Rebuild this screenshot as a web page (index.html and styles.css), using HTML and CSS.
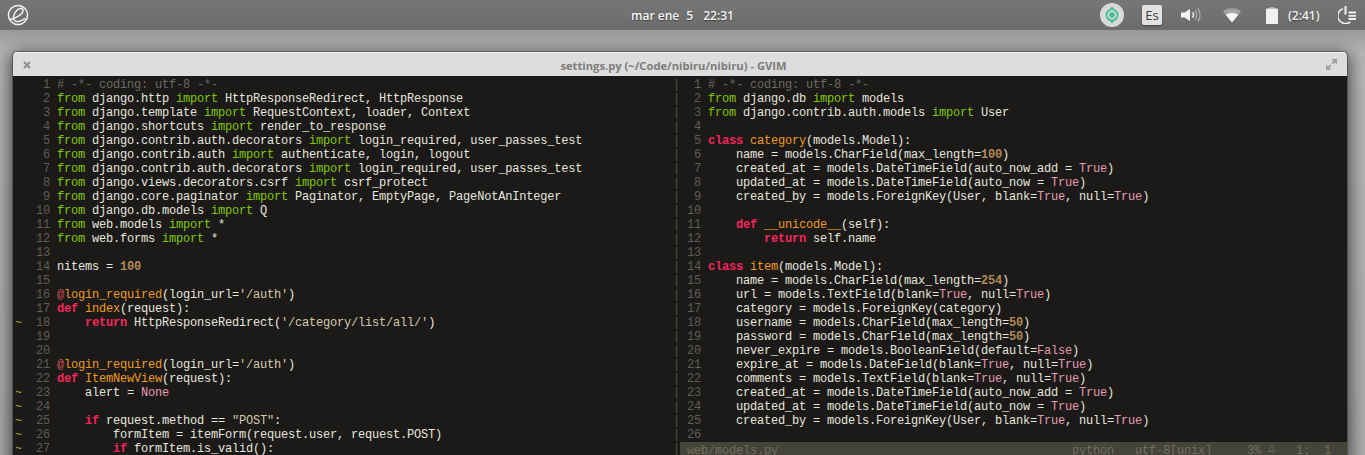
FILE: index.html
```html
<!DOCTYPE html>
<html lang="es">
<head>
<meta charset="utf-8">
<title>settings.py - GVIM</title>
<link rel="stylesheet" href="styles.css">
</head>
<body>
<header class="panel">
  <div class="panel-left">
    <svg class="logo" width="22" height="22" viewBox="0 0 22 22" fill="none" stroke="#f2f2f2" stroke-width="1.5">
      <circle cx="11" cy="11" r="9.6"/>
      <path d="M2.6 15.6C6.5 15.2 15.5 10.8 16 6.8 16.3 4 12.6 3.7 10.2 6 7.2 8.9 5.3 13.6 7 16.2 8.6 18.6 13.6 17.8 18.2 14.4"/>
    </svg>
  </div>
  <div class="clock"><span>mar ene</span><span>5</span><span>22:31</span></div>
  <div class="indicators">
    <svg class="ind-sync" width="24" height="24" viewBox="0 0 24 24">
      <circle cx="12" cy="12" r="12" fill="#d8d8d8"/>
      <circle cx="12" cy="12" r="5.6" fill="none" stroke="#3fbf96" stroke-width="1.8"/>
      <circle cx="12" cy="12" r="2.8" fill="#3fbf96"/>
      <path d="M12 3.6 9.8 6.600h4.400zM12 20.400l-2.200-3h4.400z" fill="#3fbf96"/>
    </svg>
    <div class="ind-lang">Es</div>
    <svg class="ind-sound" width="21" height="16" viewBox="0 0 21 16" fill="none">
      <path d="M0 5.500h3.500L9 2v12L3.500 10.500H0z" fill="#f2f2f2"/>
      <path d="M11.500 5.500a3.500 3.500 0 0 1 0 5" stroke="#f2f2f2" stroke-width="1.500"/>
      <path d="M14 3.500a7 7 0 0 1 0 9" stroke="#a8a8a8" stroke-width="1.500"/>
      <path d="M16.800 1.500a11 11 0 0 1 0 13" stroke="#a8a8a8" stroke-width="1.500"/>
    </svg>
    <svg class="ind-wifi" width="18" height="16" viewBox="0 0 18 16">
      <path d="M0 4.500C5 .2 13 .2 18 4.500L9 15.500z" fill="#a3a3a3"/>
      <path d="M2.700 7.800C6 5.300 12 5.300 15.300 7.800L9 15.500z" fill="#f6f6f6"/>
    </svg>
    <svg class="ind-battery" width="12" height="17" viewBox="0 0 12 17">
      <path d="M3.500 0h5v1.500h-5z" fill="#b5b5b5"/>
      <rect y="1.500" width="12" height="15.500" rx="1" fill="#f2f2f2"/>
    </svg>
    <div class="ind-time">(2:41)</div>
    <svg class="ind-power" width="18" height="18" viewBox="0 0 18 18" fill="none" stroke="#f2f2f2">
      <path d="M4.800 2.800A7.600 7.600 0 1 0 12.200 15.800" stroke-width="1.600"/>
      <path d="M7.500 0v8.500" stroke-width="2"/>
      <path d="M10.500 6.500H18M10.500 9.800H18M10.500 13H18" stroke-width="1.800"/>
    </svg>
  </div>
</header>

<main class="window">
  <div class="titlebar">
    <svg class="win-close" width="8" height="8" viewBox="0 0 8 8"><path d="M1 1l6 6M7 1L1 7" stroke="#8c8c8c" stroke-width="2"/></svg>
    <div class="win-title">settings.py (~/Code/nibiru/nibiru) - GVIM</div>
    <svg class="win-max" width="11" height="11" viewBox="0 0 11 11" fill="#a0a0a0"><path d="M5.500 0H11v5.500L9 3.500 7 5.500 5.500 4 7.500 2zM0 5.500V11h5.500l-2-2 2-2L4 5.500l-2 2z"/></svg>
  </div>
  <div class="editor">
<pre class="pane pane-left"><span class="n">  1</span> <span class="c"># -*- coding: utf-8 -*-</span>
<span class="n">  2</span> <span class="k">from</span> django.http <span class="k">import</span> HttpResponseRedirect, HttpResponse
<span class="n">  3</span> <span class="k">from</span> django.template <span class="k">import</span> RequestContext, loader, Context
<span class="n">  4</span> <span class="k">from</span> django.shortcuts <span class="k">import</span> render_to_response
<span class="n">  5</span> <span class="k">from</span> django.contrib.auth.decorators <span class="k">import</span> login_required, user_passes_test
<span class="n">  6</span> <span class="k">from</span> django.contrib.auth <span class="k">import</span> authenticate, login, logout
<span class="n">  7</span> <span class="k">from</span> django.contrib.auth.decorators <span class="k">import</span> login_required, user_passes_test
<span class="n">  8</span> <span class="k">from</span> django.views.decorators.csrf <span class="k">import</span> csrf_protect
<span class="n">  9</span> <span class="k">from</span> django.core.paginator <span class="k">import</span> Paginator, EmptyPage, PageNotAnInteger
<span class="n"> 10</span> <span class="k">from</span> django.db.models <span class="k">import</span> Q
<span class="n"> 11</span> <span class="k">from</span> web.models <span class="k">import</span> *
<span class="n"> 12</span> <span class="k">from</span> web.forms <span class="k">import</span> *
<span class="n"> 13</span>
<span class="n"> 14</span> nitems = <span class="d">100</span>
<span class="n"> 15</span>
<span class="n"> 16</span> <span class="a">@</span><span class="f">login_required</span>(login_url=<span class="s">'/auth'</span>)
<span class="n"> 17</span> <span class="r">def</span> <span class="f">index</span>(request):
<span class="t">~</span><span class="n"> 18</span>     <span class="r">return</span> HttpResponseRedirect(<span class="s">'/category/list/all/'</span>)
<span class="n"> 19</span>
<span class="n"> 20</span>
<span class="n"> 21</span> <span class="a">@</span><span class="f">login_required</span>(login_url=<span class="s">'/auth'</span>)
<span class="n"> 22</span> <span class="r">def</span> <span class="f">ItemNewView</span>(request):
<span class="t">~</span><span class="n"> 23</span>     alert = <span class="b">None</span>
<span class="t">~</span><span class="n"> 24</span>
<span class="t">~</span><span class="n"> 25</span>     <span class="r">if</span> request.method == <span class="s">"POST"</span>:
<span class="t">~</span><span class="n"> 26</span>         formItem = itemForm(request.user, request.POST)
<span class="t">~</span><span class="n"> 27</span>         <span class="r">if</span> formItem.is_valid():</pre>
<pre class="pane pane-sep">|
|
|
|
|
|
|
|
|
|
|
|
|
|
|
|
|
|
|
|
|
|
|
|
|
|
|</pre>
<div class="pane-right">
<pre class="pane"><span class="n">  1</span> <span class="c"># -*- coding: utf-8 -*-</span>
<span class="n">  2</span> <span class="k">from</span> django.db <span class="k">import</span> models
<span class="n">  3</span> <span class="k">from</span> django.contrib.auth.models <span class="k">import</span> User
<span class="n">  4</span>
<span class="n">  5</span> <span class="r">class</span> <span class="f">category</span>(models.Model):
<span class="n">  6</span>     name = models.CharField(max_length=<span class="d">100</span>)
<span class="n">  7</span>     created_at = models.DateTimeField(auto_now_add = <span class="b">True</span>)
<span class="n">  8</span>     updated_at = models.DateTimeField(auto_now = <span class="b">True</span>)
<span class="n">  9</span>     created_by = models.ForeignKey(User, blank=<span class="b">True</span>, null=<span class="b">True</span>)
<span class="n"> 10</span>
<span class="n"> 11</span>     <span class="r">def</span> <span class="f">__unicode__</span>(self):
<span class="n"> 12</span>         <span class="r">return</span> self.name
<span class="n"> 13</span>
<span class="n"> 14</span> <span class="r">class</span> <span class="f">item</span>(models.Model):
<span class="n"> 15</span>     name = models.CharField(max_length=<span class="d">254</span>)
<span class="n"> 16</span>     url = models.TextField(blank=<span class="b">True</span>, null=<span class="b">True</span>)
<span class="n"> 17</span>     category = models.ForeignKey(category)
<span class="n"> 18</span>     username = models.CharField(max_length=<span class="d">50</span>)
<span class="n"> 19</span>     password = models.CharField(max_length=<span class="d">50</span>)
<span class="n"> 20</span>     never_expire = models.BooleanField(default=<span class="b">False</span>)
<span class="n"> 21</span>     expire_at = models.DateField(blank=<span class="b">True</span>, null=<span class="b">True</span>)
<span class="n"> 22</span>     comments = models.TextField(blank=<span class="b">True</span>, null=<span class="b">True</span>)
<span class="n"> 23</span>     created_at = models.DateTimeField(auto_now_add = <span class="b">True</span>)
<span class="n"> 24</span>     updated_at = models.DateTimeField(auto_now = <span class="b">True</span>)
<span class="n"> 25</span>     created_by = models.ForeignKey(User, blank=<span class="b">True</span>, null=<span class="b">True</span>)
<span class="n"> 26</span></pre>
<pre class="status"> web/models.py                                          python   utf-8[unix]     3% <span class="arrow">△</span>   1:  1</pre>
</div>
  </div>
</main>
</body>
</html>
```

FILE: styles.css
```css
* { box-sizing: border-box; }

html, body {
  margin: 0;
  height: 455px;
  overflow: hidden;
}

body {
  position: relative;
  background: linear-gradient(#999 0, #b4b4b4 22px, #a8a8a8 100%) 0 30px no-repeat;
  background-color: #a8a8a8;
  font-family: "Open Sans", "Liberation Sans", sans-serif;
}

.panel {
  display: grid;
  grid-template-columns: 1fr auto 1fr;
  align-items: center;
  height: 30px;
  background: linear-gradient(#767676, #6c6c6c);
  color: #f6f6f6;
  font-size: 12px;
  font-weight: 600;
  text-shadow: 0 1px 1px rgba(0, 0, 0, .45);
}

.panel-left {
  display: flex;
  align-items: center;
  padding-left: 7px;
}

.clock {
  display: flex;
  gap: 7px;
}

.clock span:last-child { margin-left: 3px; }

.indicators {
  display: flex;
  align-items: center;
  justify-content: flex-end;
  padding-right: 9px;
}

.ind-lang {
  display: flex;
  align-items: center;
  justify-content: center;
  width: 20px;
  height: 20px;
  margin-left: 18px;
  border-radius: 2px;
  background: #e2e2e2;
  box-shadow: 0 1px 2px rgba(0, 0, 0, .4);
  color: #3c3c3c;
  font-size: 13px;
  font-weight: 400;
  text-shadow: none;
}

.ind-sound { margin-left: 19px; }
.ind-wifi { margin-left: 21px; }
.ind-battery { margin-left: 25px; }
.ind-time { margin-left: 10px; width: 32px; white-space: nowrap; }
.ind-power { margin-left: 18px; }

.window {
  position: absolute;
  left: 13px;
  top: 52px;
  width: 1334px;
  height: 420px;
  border-radius: 4px 4px 0 0;
  background: #1b1a18;
  box-shadow: 0 0 0 1px rgba(60, 60, 60, .55), 0 4px 16px 3px rgba(0, 0, 0, .6);
  overflow: hidden;
}

.titlebar {
  display: flex;
  align-items: center;
  justify-content: space-between;
  height: 24px;
  padding: 0 10px;
  background: #dddddd;
  border-top: 1px solid #f2f2f2;
}

.win-title {
  padding: 2px 10px 0 0;
  color: #7c7c7c;
  font-size: 11.200px;
  font-weight: 700;
}

.editor {
  display: flex;
  padding: 2px 0 0 2px;
}

.pane, .status {
  margin: 0;
  font-family: "Liberation Mono", "DejaVu Sans Mono", monospace;
  font-size: 12px;
  letter-spacing: -.2px;
  line-height: 14px;
  color: #e6e6dc;
}

.pane-left {
  width: 658px;
  flex: none;
}

.pane-left .n:not(.t + .n) { margin-left: 14px; }
.pane-left .t + .n { margin-left: 7px; }

.pane-sep {
  width: 7px;
  flex: none;
  color: #55554a;
}

.pane-right {
  width: 667px;
  flex: none;
}

.status {
  height: 13px;
  line-height: 12px;
  background: #45443a;
  color: #6f6e5c;
}

.arrow {
  display: inline-block;
  width: 7px;
  overflow: hidden;
}

.n { color: #5e5e56; }
.t { color: #a8a832; }
.c { color: #6b6b62; }
.k { color: #82c800; }
.r { color: #f5255c; font-weight: 700; }
.f { color: #ee9a1e; }
.a { color: #c94f4f; }
.s { color: #d3cba6; }
.d { color: #b08a55; font-weight: 700; }
.b { color: #e39bb0; }
```
